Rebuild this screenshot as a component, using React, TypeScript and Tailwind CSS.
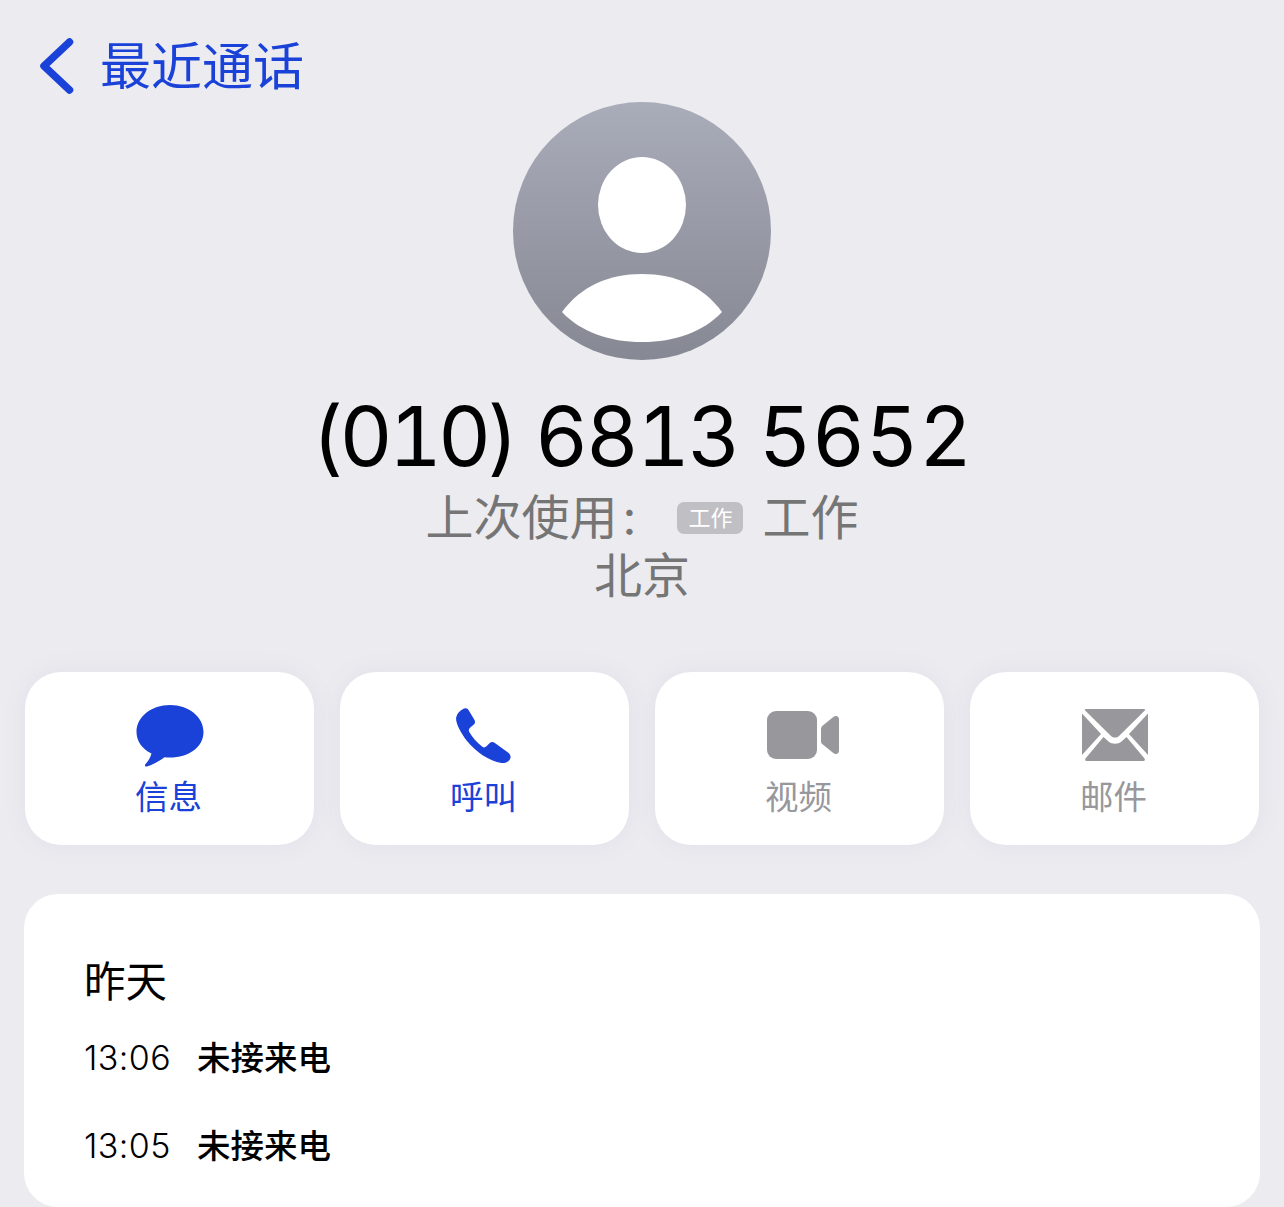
const cjk = "font-['Inter','Noto_Sans_CJK_SC',sans-serif]";

function MessageIcon() {
  return (
    <svg width="68" height="62" viewBox="0 0 68 62" className="block">
      <path
        fill="currentColor"
        d="M34 0C52.5 0 67.5 11.8 67.5 27C67.5 42.2 52.5 52.5 34 52.5C32 52.5 30 52.4 28.5 52.2C24 55.5 16 60 11 61.5C9.5 62 8.3 60.5 9.3 59.3C11.5 56.8 14.5 53 15.5 48.5C6 44 .5 36 .5 27C.5 11.8 15.5 0 34 0Z"
      />
    </svg>
  );
}

function PhoneIcon() {
  return (
    <svg width="55" height="55" viewBox="0 0 55 55" className="block">
      <path
        fill="currentColor"
        d="M7 1C9 -.2 11.5 .3 12.5 2L18.5 12C19.5 13.8 19 15.6 17.5 16.8L14 19.8C12.6 21 12.5 22.5 13.3 24C16 29 21 34.5 26 38.5C27.5 39.7 29 39.8 30.5 38.3L33.5 35.3C35 33.8 36.8 33.7 38.5 34.8L52 44.5C54.5 46.3 55.5 49.5 53.5 52C51.5 54.5 48.5 55.5 45.5 55C33 53 20 44 11 33C4 24 -1 14 .3 9C1 5.5 4 2.8 7 1Z"
      />
    </svg>
  );
}

function VideoIcon() {
  return (
    <svg width="72" height="48" viewBox="0 0 72 48" className="block">
      <rect x="0" y="0" width="50" height="48" rx="9" fill="currentColor" />
      <path
        fill="currentColor"
        d="M54 18C54 16.5 54.6 15.5 55.5 14.7L66 6.2C68.8 4 72 5 72 8.5V39.5C72 43 68.8 44 66 41.8L55.5 33.3C54.6 32.5 54 31.5 54 30Z"
      />
    </svg>
  );
}

function MailIcon() {
  return (
    <svg width="66" height="52" viewBox="0 0 66 52" className="block">
      <path fill="currentColor" d="M4 0H62C63 0 63.5 .8 62.8 1.6L37 27C34.8 29 31.2 29 29 27L3.2 1.6C2.5 .8 3 0 4 0Z" />
      <path fill="currentColor" d="M0 4.5L19 25L0 46Z" />
      <path fill="currentColor" d="M66 4.5L47 25L66 46Z" />
      <path fill="currentColor" d="M21.5 28L26.5 32.5C30 35.5 36 35.5 39.5 32.5L44.5 28L62.5 49.5C63.2 50.6 62.8 52 61.5 52H4.5C3.2 52 2.8 50.6 3.5 49.5Z" />
    </svg>
  );
}

const actions = [
  { label: "信息", icon: <MessageIcon />, color: "text-[#1a41d8]", iconBox: "pt-[33px]" },
  { label: "呼叫", icon: <PhoneIcon />, color: "text-[#1a41d8]", iconBox: "pt-[36px] pr-[2px]" },
  { label: "视频", icon: <VideoIcon />, color: "text-[#97979c]", iconBox: "pt-[39px] pl-[7px]" },
  { label: "邮件", icon: <MailIcon />, color: "text-[#97979c]", iconBox: "pt-[37px]" },
];

const calls = [
  { time: "13:06", text: "未接来电" },
  { time: "13:05", text: "未接来电" },
];

export default function App() {
  return (
    <div className={`h-[1207px] overflow-hidden bg-[#ebebf0] ${cjk}`}>
      {/* back */}
      <div className="flex h-[102px] items-start pl-[39px] pt-[38px] text-[#1a41d8]">
        <svg width="35" height="56" viewBox="0 0 35 56" className="block">
          <path d="M30.5 4L5 28L30.5 52" fill="none" stroke="currentColor" strokeWidth="7.5" strokeLinecap="round" strokeLinejoin="round" />
        </svg>
        <span className="ml-[26px] mt-[1px] text-[51px] leading-[56px]">最近通话</span>
      </div>

      {/* avatar + number */}
      <div className="flex flex-col items-center">
        <div className="h-[258px] w-[258px] rounded-full bg-gradient-to-b from-[#a9acb9] to-[#868993]">
          <svg width="258" height="258" viewBox="0 0 258 258" className="block">
            <ellipse cx="129" cy="103" rx="44" ry="48" fill="#fff" />
            <path d="M49 210C68 184 96 172 129 172C162 172 190 184 209 210C190 230 162 240 129 240C96 240 68 230 49 210Z" fill="#fff" />
          </svg>
        </div>
        <div className="mt-[29px] text-[82px] leading-[96px] tabular-nums tracking-[-2.2px] text-black">
          <span className="tracking-[-4px]">(010)</span> 6813 <span className="tracking-[0.3px]">5652</span>
        </div>
        <div className="mt-[4px] flex h-[58px] items-center text-[48px] text-[#757575]">
          <span>上次使用</span>
          <span className="ml-[5px]">:</span>
          <span className="ml-[41px] flex h-[32px] w-[66px] items-center justify-center rounded-[7px] bg-[#bfbfc4] text-[22px] text-[#fff]">工作</span>
          <span className="ml-[19px]">工作</span>
        </div>
        <div className="h-[58px] text-[48px] leading-[58px] text-[#757575]">北京</div>
      </div>

      {/* actions */}
      <div className="mt-[67px] flex gap-[26px] pl-[25px]">
        {actions.map((a) => (
          <div key={a.label} className={`flex h-[173px] w-[289px] flex-col items-center rounded-[36px] bg-white shadow-[0_0_24px_rgba(120,120,150,0.08)] ${a.color}`}>
            <div className={`h-[102px] ${a.iconBox}`}>{a.icon}</div>
            <span className="pr-[2px] text-[33.5px] leading-[46px]">{a.label}</span>
          </div>
        ))}
      </div>

      {/* history */}
      <div className="ml-[24px] mt-[49px] h-[313px] w-[1236px] rounded-[34px] bg-white pl-[60px] pt-[60px] text-black">
        <div className="text-[41.5px] leading-[56px]">昨天</div>
        <div className="mt-[19px]">
          {calls.map((c) => (
            <div key={c.time} className="mt-[4px] flex h-[84px] items-start pt-[6px]">
              <span className="w-[113px] text-[34px] font-light leading-[46px] tracking-[0.4px]">{c.time}</span>
              <span className="text-[33.5px] font-medium leading-[46px]">{c.text}</span>
            </div>
          ))}
        </div>
      </div>
    </div>
  );
}
